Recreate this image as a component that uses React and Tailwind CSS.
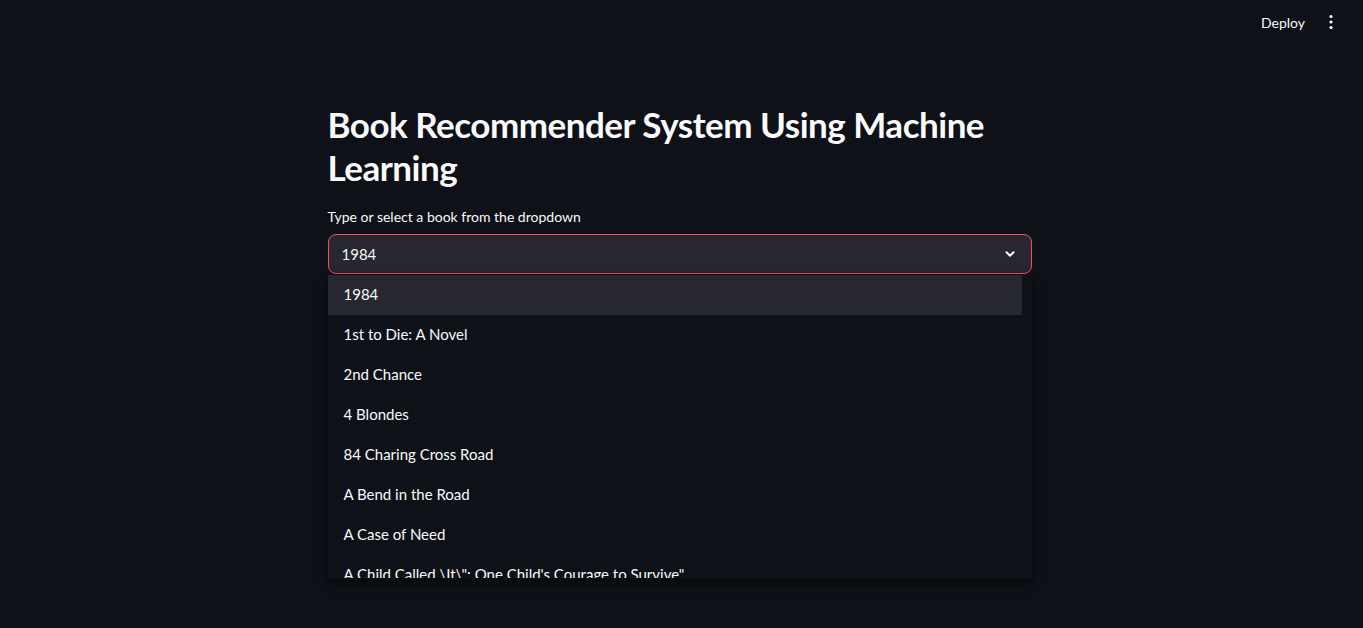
import React from 'react';

const books = [
  '1984',
  '1st to Die: A Novel',
  '2nd Chance',
  '4 Blondes',
  '84 Charing Cross Road',
  'A Bend in the Road',
  'A Case of Need',
  'A Child Called \\It\\": One Child\'s Courage to Survive"',
];

function Kebab() {
  return (
    <svg width="16" height="16" viewBox="0 0 16 16" fill="currentColor">
      <circle cx="8" cy="2.5" r="1.6" />
      <circle cx="8" cy="8" r="1.6" />
      <circle cx="8" cy="13.5" r="1.6" />
    </svg>
  );
}

function Chevron() {
  return (
    <svg width="14" height="14" viewBox="0 0 24 24" fill="none" stroke="currentColor" strokeWidth="3.5" strokeLinecap="round" strokeLinejoin="round">
      <path d="M6 9l6 6 6-6" />
    </svg>
  );
}

export default function App() {
  return (
    <div
      className="min-h-screen bg-[#0e1117] text-[#fafafa]"
      style={{ fontFamily: 'Lato, "Noto Sans", sans-serif' }}
    >
      <header className="flex h-[44px] items-center justify-end gap-[18px] pr-[24px]">
        <span className="text-[14px]">Deploy</span>
        <Kebab />
      </header>

      <main className="mx-auto w-[708px] pr-[4px] pt-[59px]">
        <h1 className="text-[35px] font-bold leading-[43px] tracking-[-0.5px]">
          Book Recommender System Using Machine Learning
        </h1>

        <label className="mt-[18px] block text-[14px] leading-[20px]">
          Type or select a book from the dropdown
        </label>

        <div className="relative mt-[7px]">
          <div className="flex h-[40px] items-center justify-between rounded-[8px] border border-[#ff4b4b] bg-[#262730] pl-[13px] pr-[14px]">
            <span className="text-[15px]">1984</span>
            <Chevron />
          </div>

          {/* open listbox, clipped mid-row like the real dropdown */}
          <div className="absolute left-0 right-0 top-[41px] h-[303px] overflow-hidden bg-[#0e1117] pr-[10px] shadow-[0_4px_10px_rgba(0,0,0,0.6)]">
            {books.map((b, i) => (
              <div
                key={b}
                className={
                  'flex h-[40px] items-center pb-[1px] pl-[16px] text-[15px] ' +
                  (i === 0 ? 'bg-[#262730]' : '')
                }
              >
                {b}
              </div>
            ))}
          </div>
        </div>
      </main>
    </div>
  );
}
